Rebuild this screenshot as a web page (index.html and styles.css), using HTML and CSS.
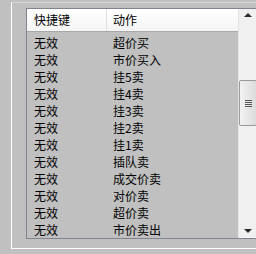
FILE: index.html
```html
<!DOCTYPE html>
<html>
<head>
<meta charset="utf-8">
<link rel="stylesheet" href="styles.css">
</head>
<body>
<div class="group">
  <div class="list">
    <div class="main">
      <div class="header">
        <div class="hcell c1">快捷键</div>
        <div class="hcell c2">动作</div>
      </div>
      <div class="rows">
        <div class="row"><span class="c1">无效</span><span class="c2">超价买</span></div>
        <div class="row"><span class="c1">无效</span><span class="c2">市价买入</span></div>
        <div class="row"><span class="c1">无效</span><span class="c2">挂5卖</span></div>
        <div class="row"><span class="c1">无效</span><span class="c2">挂4卖</span></div>
        <div class="row"><span class="c1">无效</span><span class="c2">挂3卖</span></div>
        <div class="row"><span class="c1">无效</span><span class="c2">挂2卖</span></div>
        <div class="row"><span class="c1">无效</span><span class="c2">挂1卖</span></div>
        <div class="row"><span class="c1">无效</span><span class="c2">插队卖</span></div>
        <div class="row"><span class="c1">无效</span><span class="c2">成交价卖</span></div>
        <div class="row"><span class="c1">无效</span><span class="c2">对价卖</span></div>
        <div class="row"><span class="c1">无效</span><span class="c2">超价卖</span></div>
        <div class="row"><span class="c1">无效</span><span class="c2">市价卖出</span></div>
      </div>
    </div>
    <div class="scrollbar">
      <div class="arrow up"></div>
      <div class="track">
        <div class="thumb"><div class="grip"></div></div>
      </div>
      <div class="arrow down"></div>
    </div>
  </div>
</div>
</body>
</html>
```
FILE: styles.css
```css
html, body {
  margin: 0;
  padding: 0;
}
body {
  width: 256px;
  height: 254px;
  overflow: hidden;
  background: #c0c0c0;
  font-family: "Noto Sans CJK SC", "Noto Sans", sans-serif;
  font-size: 12px;
  color: #000;
}
.group {
  margin: 2px 0 0 11px;
  height: 247px;
  box-sizing: border-box;
  border-left: 1px solid #ffffff;
  border-top: 1px solid #d8d8d8;
  border-bottom: 1px solid #ffffff;
  padding: 5px 0 0 14px;
}
.list {
  display: flex;
  width: 240px;
  height: 231px;
  box-sizing: border-box;
  border: 1px solid #828290;
  border-right: none;
}
.main {
  width: 211px;
  display: flex;
  flex-direction: column;
  overflow: hidden;
}
.header {
  display: flex;
  height: 22px;
  background: linear-gradient(#ffffff, #f4f4f4);
  border-bottom: 1px solid #a8a8a8;
  flex: none;
}
.hcell {
  line-height: 22px;
  box-sizing: border-box;
}
.hcell.c1 {
  width: 80px;
  padding-left: 7px;
  border-right: 1px solid #e0e0e0;
}
.hcell.c2 {
  padding-left: 6px;
}
.rows {
  display: flex;
  flex-direction: column;
  padding-top: 2px;
}
.row {
  display: flex;
  height: 17px;
  line-height: 17px;
  flex: none;
}
.row .c1 {
  width: 80px;
  padding-left: 7px;
  box-sizing: border-box;
}
.row .c2 {
  padding-left: 6px;
}
.scrollbar {
  width: 18px;
  display: flex;
  flex-direction: column;
  background: #f0f0f0;
  border-left: 1px solid #e4e4e4;
}
.arrow {
  height: 17px;
  flex: none;
  position: relative;
}
.arrow::after {
  content: "";
  position: absolute;
  left: 5px;
  width: 0;
  height: 0;
  border-left: 4px solid transparent;
  border-right: 4px solid transparent;
}
.arrow.up::after {
  top: 4px;
  border-bottom: 4px solid #2a2a2a;
}
.arrow.down::after {
  top: 8px;
  border-top: 4px solid #2a2a2a;
}
.track {
  flex: 1;
  padding-top: 54px;
}
.thumb {
  height: 46px;
  box-sizing: border-box;
  border: 1px solid #9a9a9a;
  border-radius: 2px;
  background: linear-gradient(90deg, #f2f2f2, #dcdcdc);
  display: flex;
  align-items: center;
  justify-content: center;
}
.grip {
  width: 7px;
  height: 7px;
  background: repeating-linear-gradient(#555 0 1px, transparent 1px 2px);
}
```
